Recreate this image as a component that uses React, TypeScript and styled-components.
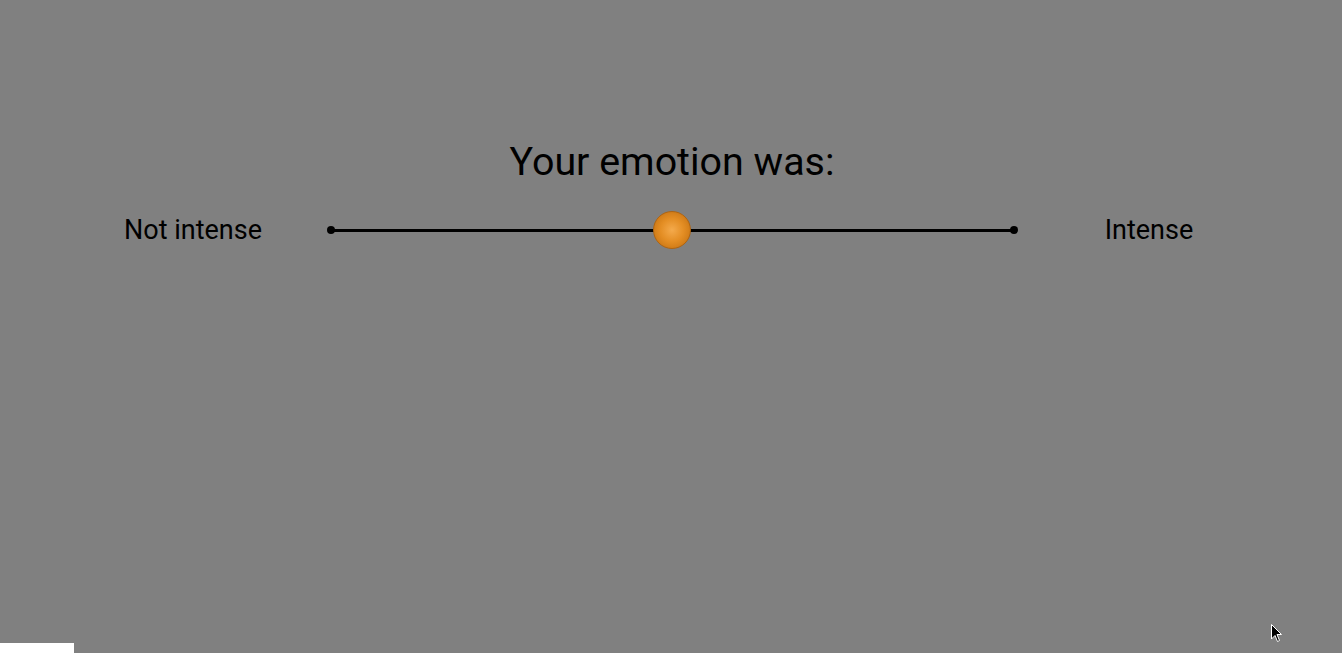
import React from "react";
import styled, { createGlobalStyle } from "styled-components";

const Global = createGlobalStyle`
  html, body { margin: 0; padding: 0; background: #808080; }
  body { font-family: Roboto, "Noto Sans", sans-serif; color: #000; overflow: hidden; }
  #root { height: 653px; }
`;

const Page = styled.div`
  position: relative;
  width: 1342px;
  height: 653px;
  background: #808080;
  display: flex;
  flex-direction: column;
  align-items: stretch;
  padding-top: 139px;
  box-sizing: border-box;
`;

const Title = styled.h1`
  margin: 0;
  font-weight: 400;
  font-size: 39.4px;
  line-height: 46px;
  text-align: center;
  padding-left: 2px;
`;

const Row = styled.div`
  display: flex;
  align-items: center;
  padding: 0 63px;
  margin-top: 21px;
  height: 48px;
`;

const Label = styled.div`
  width: 260px;
  text-align: center;
  font-size: 27px;
  line-height: 30px;
`;

const Track = styled.div`
  position: relative;
  flex: 1;
  margin: 0 6px 0 7px;
  height: 3px;
  background: #000;
  display: flex;
  align-items: center;
  justify-content: space-between;
`;

const EndDot = styled.span<{ $side: "l" | "r" }>`
  width: 8px;
  height: 8px;
  border-radius: 50%;
  background: #000;
  margin: ${(p) => (p.$side === "l" ? "0 0 0 -3px" : "0 -5px 0 0")};
`;

const Thumb = styled.span`
  position: absolute;
  left: 50%;
  top: 50%;
  width: 38px;
  height: 38px;
  margin-left: -19px;
  margin-top: -19px;
  border-radius: 50%;
  box-sizing: border-box;
  border: 1px solid #b06410;
  background: radial-gradient(circle at 50% 50%, #f4aa4c 0%, #e48e24 45%, #cc7714 80%, #b8660c 100%);
`;

const WhiteBar = styled.div`
  position: absolute;
  left: 0;
  bottom: 0;
  width: 74px;
  height: 10px;
  background: #fff;
`;

const Cursor = styled.svg`
  position: absolute;
  left: 1271px;
  top: 624px;
`;

export default function App() {
  return (
    <>
      <Global />
      <Page>
        <Title>Your emotion was:</Title>
        <Row>
          <Label>Not intense</Label>
          <Track>
            <EndDot $side="l" />
            <Thumb />
            <EndDot $side="r" />
          </Track>
          <Label>Intense</Label>
        </Row>
        <WhiteBar />
        <Cursor width="12" height="19" viewBox="0 0 12 19">
          <path d="M0.5 0.5 L0.5 15 L4 11.5 L6.5 17.5 L8.5 16.5 L6 10.5 L10.5 10.5 Z" fill="#000" stroke="#fff" strokeWidth="1" />
        </Cursor>
      </Page>
    </>
  );
}
